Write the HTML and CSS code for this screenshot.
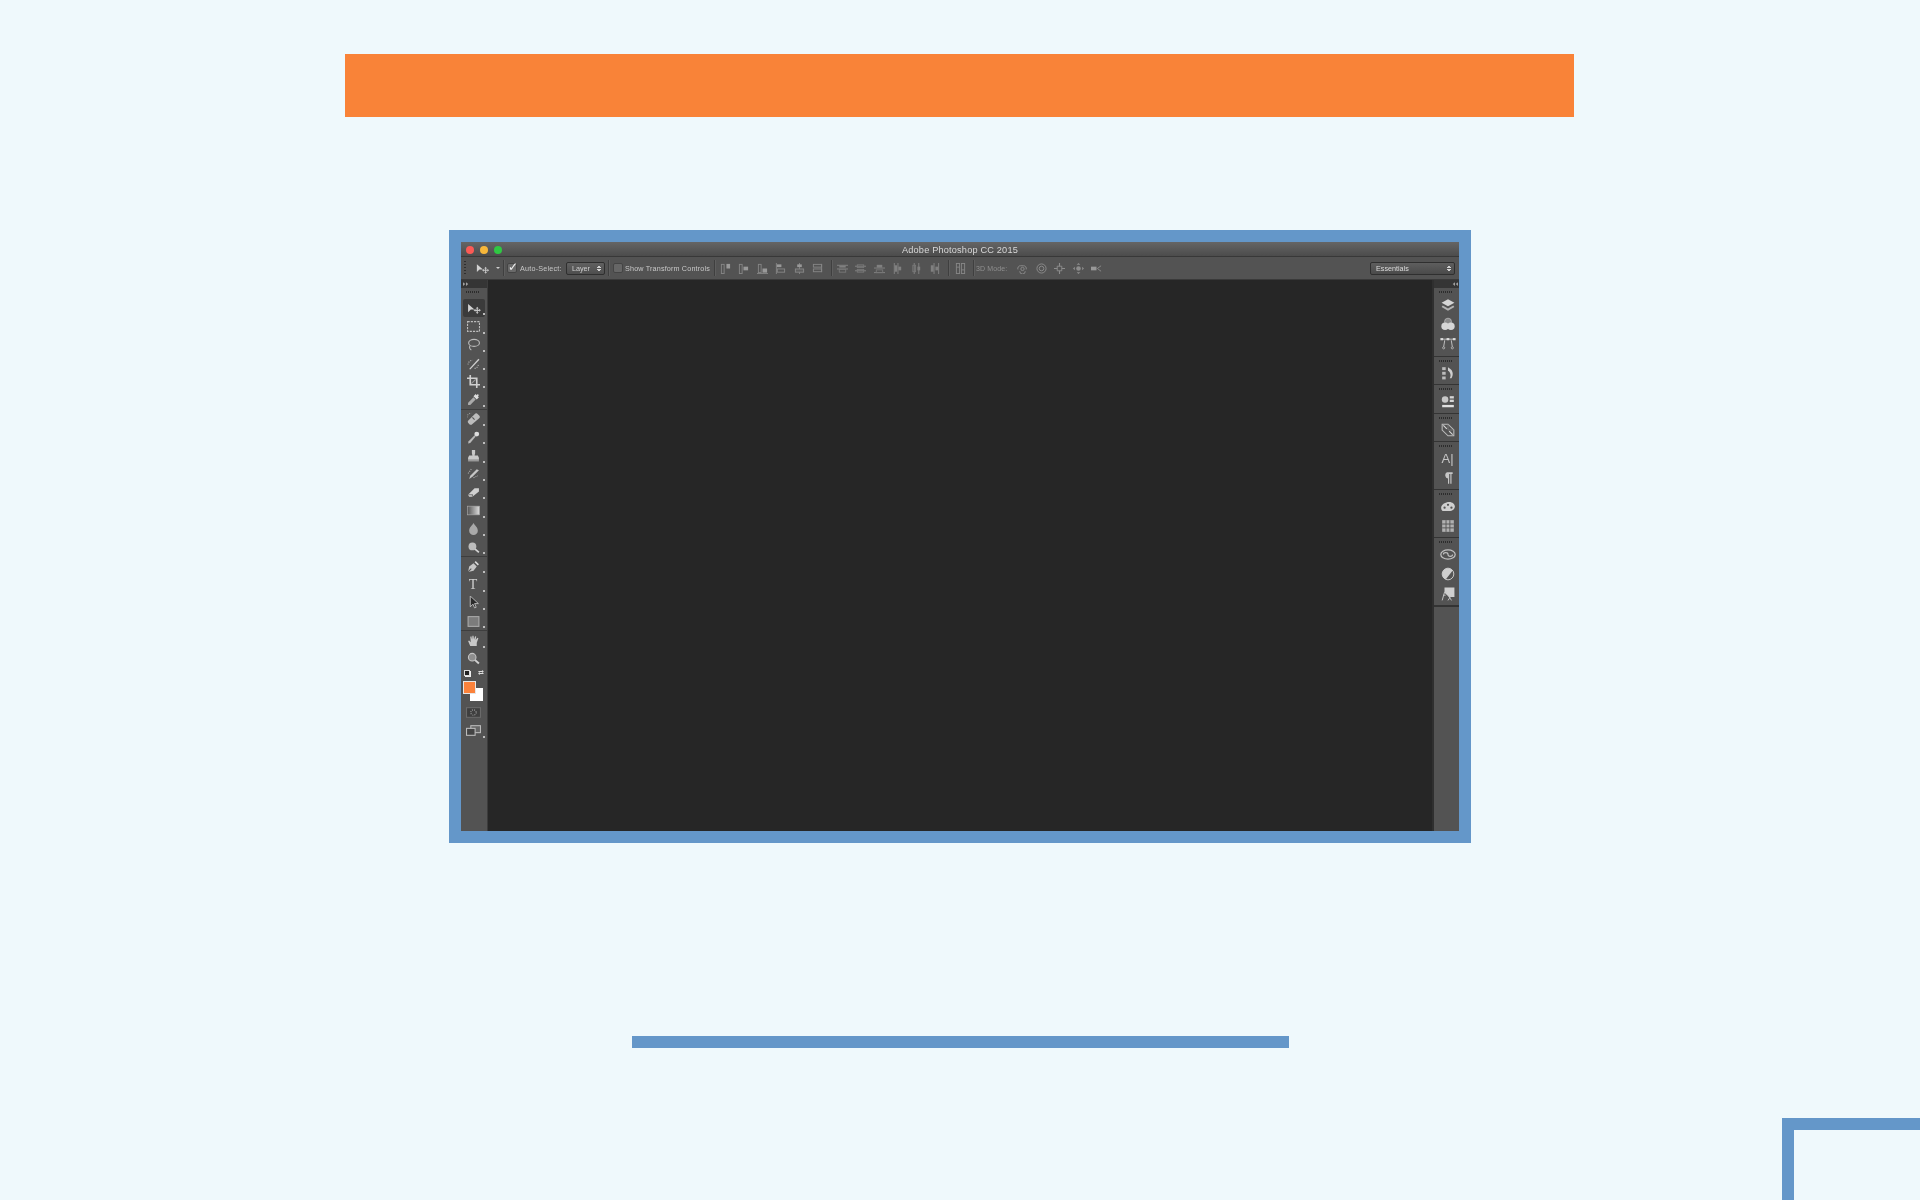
FILE: index.html
```html
<!DOCTYPE html>
<html lang="en">
<head>
<meta charset="utf-8">
<title>Adobe Photoshop CC 2015</title>
<link rel="stylesheet" href="styles.css">
</head>
<body>
<svg class="defs" width="0" height="0" aria-hidden="true">
  <symbol id="i-move" viewBox="0 0 16 12"><path d="M1 1v9l3-3h4z" fill="#d2d2d2"/><path d="M11 4l1.600 2h-1v1.400H13V6.400l2 1.600-2 1.600V8.600h-1.400V10h1L11 12 9.400 10h1V8.600H9v1L7 8l2-1.600v1h1.400V6h-1z" fill="#c4c4c4"/></symbol>
  <symbol id="i-marquee" viewBox="0 0 12 12"><rect x=".5" y="1.500" width="11" height="9" fill="none" stroke="#bdbdbd" stroke-dasharray="2 1"/></symbol>
  <symbol id="i-lasso" viewBox="0 0 12 12"><ellipse cx="6.500" cy="4.500" rx="5" ry="3.200" fill="none" stroke="#bcbcbc"/><path d="M3 7c-1 1-1 3 1 4" fill="none" stroke="#bcbcbc"/></symbol>
  <symbol id="i-wand" viewBox="0 0 12 12"><path d="M2 11l1 .5 8.500-9-1-1z" fill="#cfcfcf"/><path d="M1 7a4 4 0 0 1 4-4" fill="none" stroke="#b4b4b4" stroke-dasharray="1 1"/><path d="M7 10.500a4 4 0 0 0 3.500-3.500" fill="none" stroke="#b4b4b4" stroke-dasharray="1 1"/></symbol>
  <symbol id="i-crop" viewBox="0 0 12 12"><path d="M3 0v9h9M0 3h9v9" fill="none" stroke="#cfcfcf" stroke-width="1.500"/><path d="M4 8l4-4" stroke="#999"/></symbol>
  <symbol id="i-eyedrop" viewBox="0 0 12 12"><path d="M1 11v-2l5-5 2 2-5 5z" fill="#aaa"/><path d="M6 3l2-2 1 1 1-1 1 1-1 1 1 1-2 2z" fill="#ddd"/></symbol>
  <symbol id="i-heal" viewBox="0 0 12 12"><path d="M1 8l6-6a2 2 0 0 1 3 0l1 1a2 2 0 0 1 0 3l-6 5a2 2 0 0 1-3 0L1 10a2 2 0 0 1 0-2z" fill="#bcbcbc"/><path d="M5 5l2 2" stroke="#555"/><path d="M0 5a4 4 0 0 1 4-4" fill="none" stroke="#999" stroke-dasharray="1 1"/></symbol>
  <symbol id="i-brush" viewBox="0 0 12 12"><path d="M7 4l1 1-5 6-2 .5.500-2z" fill="#b8b8b8"/><ellipse cx="9" cy="2.800" rx="2.200" ry="2.200" fill="#ddd"/></symbol>
  <symbol id="i-stamp" viewBox="0 0 12 12"><path d="M4.500 1h3v3L7 6h3l1 2v2H1V8l1-2h3l-.5-2z" fill="#c8c8c8"/><rect x="1" y="10" width="10" height="1.500" fill="#9a9a9a"/></symbol>
  <symbol id="i-history" viewBox="0 0 12 12"><path d="M2 11l1-3 6-6 2 1-6 6z" fill="#c6c6c6"/><path d="M1 6l3-4M6 10l4-2" stroke="#aaa" stroke-dasharray="1 1"/></symbol>
  <symbol id="i-eraser" viewBox="0 0 12 12"><path d="M1 8l6-6h4v3L5 10H2z" fill="#d0d0d0"/><path d="M1 8h4v2" fill="none" stroke="#777"/></symbol>
  <symbol id="i-gradient" viewBox="0 0 12 12"><defs><linearGradient id="gr"><stop offset="0" stop-color="#555"/><stop offset="1" stop-color="#ddd"/></linearGradient></defs><rect x=".5" y="2" width="11" height="8" fill="url(#gr)" stroke="#aaa" stroke-width=".6"/></symbol>
  <symbol id="i-drop" viewBox="0 0 12 12"><path d="M6 1c1 2 4 4 4 7a4 4 0 0 1-8 0c0-3 3-5 4-7z" fill="#a9a9a9"/></symbol>
  <symbol id="i-dodge" viewBox="0 0 12 12"><circle cx="5" cy="5" r="3.600" fill="#bcbcbc"/><path d="M7.500 7.500l3.500 3" stroke="#d4d4d4" stroke-width="1.600"/></symbol>
  <symbol id="i-pen" viewBox="0 0 12 12"><path d="M1 11l1-5 4-3 3 3-3 4z" fill="#c6c6c6"/><path d="M7 2l1-1 3 3-1 1z" fill="#d8d8d8"/><path d="M1 11l3-3" stroke="#555"/></symbol>
  <symbol id="i-arrow" viewBox="0 0 12 12"><path d="M3 0v10l2.500-2.500 1.500 3.500 1.500-.6L7 7h3.500z" fill="#2a2a2a" stroke="#c4c4c4" stroke-width=".8"/></symbol>
  <symbol id="i-rect" viewBox="0 0 12 12"><rect x="1" y="1.500" width="10" height="9" fill="#7c7c7c" stroke="#aaa"/></symbol>
  <symbol id="i-hand" viewBox="0 0 12 12"><path d="M3 11L1 6.500l1-.5 1.500 1.500L3 2.500l1-.5.700 3L5 1.500h1L6.500 5 7.500 2l1 .3L8 5.500 9.500 3.500l1 .5L9 8v3z" fill="#c8c8c8"/></symbol>
  <symbol id="i-zoom" viewBox="0 0 12 12"><circle cx="4.800" cy="4.800" r="3.500" fill="#8e8e8e" stroke="#c4c4c4"/><path d="M7.500 7.500l3.500 3.200" stroke="#d0d0d0" stroke-width="1.800"/></symbol>
  <symbol id="i-mask" viewBox="0 0 14 10"><rect x=".5" y=".5" width="13" height="9" fill="#3f3f3f" stroke="#6a6a6a"/><circle cx="7" cy="5" r="2.500" fill="none" stroke="#999" stroke-dasharray="1 1"/></symbol>
  <symbol id="i-screen" viewBox="0 0 14 10"><rect x="4.500" y=".5" width="9" height="6.500" fill="#666" stroke="#bbb"/><rect x=".5" y="3" width="8" height="6.500" fill="#444" stroke="#bbb"/></symbol>
  <symbol id="i-layers" viewBox="0 0 12 12"><path d="M6 1l5.500 3L6 7 .5 4z" fill="#d6d6d6"/><path d="M1.500 6.500L6 9l4.500-2.500 1 1.200L6 11 .5 7.700z" fill="#b4b4b4"/></symbol>
  <symbol id="i-channels" viewBox="0 0 12 12"><circle cx="6" cy="4" r="3" fill="#888" stroke="#ccc" stroke-width=".5"/><circle cx="3.500" cy="8" r="3.200" fill="#d6d6d6"/><circle cx="8.500" cy="8" r="3.200" fill="#d6d6d6"/></symbol>
  <symbol id="i-paths" viewBox="0 0 14 12"><path d="M2 2h10M4 3l-1 6M10 3l1 6" fill="none" stroke="#c0c0c0" stroke-width=".9"/><rect x="0" y="1" width="2.500" height="2" fill="#ddd"/><rect x="5.700" y="1" width="2.500" height="2" fill="#ddd"/><rect x="11.500" y="1" width="2.500" height="2" fill="#ddd"/><circle cx="3" cy="10" r="1" fill="none" stroke="#c0c0c0" stroke-width=".7"/><circle cx="11" cy="10" r="1" fill="none" stroke="#c0c0c0" stroke-width=".7"/></symbol>
  <symbol id="i-actions" viewBox="0 0 12 12"><rect x="1" y="1" width="3" height="2.500" fill="#bbb"/><rect x="1" y="5" width="3" height="2.500" fill="#bbb"/><rect x="1" y="9" width="3" height="2.500" fill="#bbb"/><path d="M6 1l2 1.500C10 4 11 7 9 10.500H7.500C9 8 8 5 6 4z" fill="#cfcfcf"/></symbol>
  <symbol id="i-adjust" viewBox="0 0 12 12"><circle cx="3.500" cy="3.800" r="2.800" fill="#c8c8c8"/><rect x="7.500" y="1" width="3.500" height="2" fill="#d6d6d6"/><rect x="7.500" y="4" width="3.500" height="2" fill="#d6d6d6"/><rect x="1" y="8.500" width="10" height="2" fill="#e0e0e0"/></symbol>
  <symbol id="i-styles" viewBox="0 0 12 12"><path d="M1 1h5l5 5v5H6L1 6z" fill="none" stroke="#bcbcbc" stroke-width=".9"/><path d="M2 2l3 3M7 7l3 3" stroke="#d6d6d6"/><path d="M6 1v5M6 6h5" stroke="#888" stroke-width=".6"/></symbol>
  <symbol id="i-para" viewBox="0 0 12 12"><path d="M5 1h5v1.500H9V11H8V2.500H7V11H6V6.500a3 3 0 0 1-1-5.500z" fill="#c6c6c6"/></symbol>
  <symbol id="i-palette" viewBox="0 0 14 10"><path d="M1 6c0-3 4-5 7-5 3 0 5 2 5 4s-2 4-5 4H3C2 9 1 8 1 6z" fill="#d0d0d0"/><circle cx="4" cy="6" r="1" fill="#555"/><circle cx="7" cy="3.500" r="1" fill="#555"/><circle cx="10" cy="6" r="1" fill="#555"/></symbol>
  <symbol id="i-grid" viewBox="0 0 12 12"><rect x="1" y="1" width="10" height="10" fill="#b0b0b0"/><path d="M1 4.300h10M1 7.600h10M4.300 1v10M7.600 1v10" stroke="#555" stroke-width=".8"/></symbol>
  <symbol id="i-cc" viewBox="0 0 14 10"><ellipse cx="7" cy="5" rx="6.300" ry="4" fill="none" stroke="#c0c0c0" stroke-width="1.100"/><path d="M3 5a2 1.600 0 0 1 4 0 2 1.600 0 0 0 4 0" fill="none" stroke="#c0c0c0"/></symbol>
  <symbol id="i-halfc" viewBox="0 0 12 12"><circle cx="6" cy="6" r="5" fill="#d0d0d0"/><path d="M10 3a5 5 0 0 1-6 7.700z" fill="#555"/><circle cx="6" cy="6" r="5" fill="none" stroke="#d0d0d0" stroke-width=".8"/></symbol>
  <symbol id="i-fx" viewBox="0 0 12 12"><path d="M3 .5h8.500v8H7L3 5z" fill="#cfcfcf"/><path d="M1 11.500l2-7h2M2 7h2M6 7l3 4.500M9 7l-3 4.500" fill="none" stroke="#c8c8c8" stroke-width=".8"/></symbol>
  <symbol id="a-top" viewBox="0 0 12 12"><rect x="1.500" y="1.500" width="3" height="10" fill="none" stroke="#868686"/><rect x="7" y="1" width="4" height="5" fill="#999"/></symbol>
  <symbol id="a-mid" viewBox="0 0 12 12"><rect x="1.500" y="1.500" width="3" height="10" fill="none" stroke="#868686"/><rect x="6" y="4" width="5" height="4" fill="#999"/></symbol>
  <symbol id="a-bot" viewBox="0 0 12 12"><rect x="1.500" y="1.500" width="3" height="9" fill="none" stroke="#868686"/><rect x="6" y="6" width="5" height="4.500" fill="#999"/><path d="M0 11.500h12" stroke="#868686"/></symbol>
  <symbol id="a-left" viewBox="0 0 12 12"><path d="M1.500 0v12" stroke="#868686"/><rect x="2" y="1.500" width="5" height="3" fill="#999"/><rect x="2.500" y="6.500" width="8" height="3.500" fill="none" stroke="#868686"/></symbol>
  <symbol id="a-cen" viewBox="0 0 12 12"><path d="M6 0v12" stroke="#868686"/><rect x="3.500" y="1.500" width="5" height="3" fill="#999"/><rect x="1.500" y="6.500" width="9" height="3.500" fill="#5e5e5e" stroke="#868686"/></symbol>
  <symbol id="a-right" viewBox="0 0 12 12"><path d="M10.500 1v9" stroke="#868686"/><rect x="1.500" y="1.500" width="9" height="3" fill="none" stroke="#868686"/><rect x="1.500" y="6.500" width="9" height="3" fill="none" stroke="#868686"/></symbol>
  <symbol id="d-h1" viewBox="0 0 12 12"><path d="M0 2.500h12M0 6.500h12" stroke="#868686"/><rect x="2.500" y="3" width="7" height="2" fill="#808080"/><rect x="2.500" y="7" width="7" height="3" fill="none" stroke="#777"/></symbol>
  <symbol id="d-h2" viewBox="0 0 12 12"><path d="M0 3.500h12M0 8.500h12" stroke="#868686"/><rect x="2.500" y="2" width="7" height="3" fill="none" stroke="#777"/><rect x="2.500" y="7" width="7" height="3" fill="none" stroke="#777"/></symbol>
  <symbol id="d-h3" viewBox="0 0 12 12"><path d="M0 5.500h12M0 10.500h12" stroke="#868686"/><rect x="3" y="2" width="6" height="3" fill="#808080"/><rect x="2.500" y="7.500" width="7" height="3" fill="none" stroke="#777"/></symbol>
  <symbol id="d-v1" viewBox="0 0 12 12"><path d="M2.500 0v12M6.500 0v12" stroke="#868686"/><rect x="3" y="2.500" width="2.500" height="7" fill="#808080"/><rect x="7" y="4" width="3" height="4" fill="#808080"/></symbol>
  <symbol id="d-v2" viewBox="0 0 12 12"><path d="M3.500 0v12M8.500 0v12" stroke="#868686"/><rect x="2" y="2.500" width="3" height="7" fill="none" stroke="#777"/><rect x="7" y="4" width="3" height="4" fill="#808080"/></symbol>
  <symbol id="d-v3" viewBox="0 0 12 12"><path d="M5.500 0v12M10.500 0v12" stroke="#868686"/><rect x="2" y="2.500" width="3" height="7" fill="#808080"/><rect x="7" y="4" width="3" height="4" fill="#808080"/></symbol>
  <symbol id="d-auto" viewBox="0 0 12 12"><rect x="1.500" y=".5" width="3.500" height="11" fill="none" stroke="#868686"/><rect x="7" y=".5" width="3.500" height="11" fill="none" stroke="#868686"/><path d="M1.500 4.500h3.500M7 7.500h3.500" stroke="#868686"/></symbol>
  <symbol id="t-orbit" viewBox="0 0 12 12"><path d="M1 7a3 3 0 0 1 3-4h3a3 3 0 0 1 3 4M3 9a3 3 0 0 0 6 0" fill="none" stroke="#8d8d8d"/><circle cx="6" cy="6.500" r="1.800" fill="none" stroke="#8d8d8d"/></symbol>
  <symbol id="t-roll" viewBox="0 0 12 12"><circle cx="6" cy="6" r="5" fill="none" stroke="#8d8d8d"/><circle cx="6" cy="6" r="2.500" fill="none" stroke="#8d8d8d"/></symbol>
  <symbol id="t-pan" viewBox="0 0 12 12"><path d="M6 0v12M0 6h12" stroke="#8d8d8d" stroke-width="1.200"/><path d="M3.500 3.500h5v5h-5z" fill="#535353" stroke="#8d8d8d"/></symbol>
  <symbol id="t-slide" viewBox="0 0 12 12"><path d="M6 0l2 2H4zM6 12l2-2H4zM0 6l2-2v4zM12 6l-2-2v4z" fill="#8d8d8d"/><circle cx="6" cy="6" r="2.500" fill="#8d8d8d"/></symbol>
  <symbol id="t-cam" viewBox="0 0 12 12"><rect x="0" y="4" width="6" height="4" fill="#999"/><path d="M11 3L7 6l4 3" fill="none" stroke="#8d8d8d"/></symbol>
  <symbol id="i-right" viewBox="0 0 8 5"><path d="M0 0l3 2.500L0 5zM4 0l3 2.500L4 5z" fill="#a0a0a0"/></symbol>
  <symbol id="i-left" viewBox="0 0 8 5"><path d="M4 0L1 2.500 4 5zM8 0L5 2.500 8 5z" fill="#a0a0a0"/></symbol>
</svg>

<header class="banner"></header>

<section class="frame">
  <div class="window">
    <div class="titlebar">
      <div class="lights">
        <span class="light red"></span>
        <span class="light yellow"></span>
        <span class="light green"></span>
      </div>
      <span class="title">Adobe Photoshop CC 2015</span>
    </div>

    <div class="options">
      <span class="grip-v"></span>
      <svg class="opt-tool"><use href="#i-move"/></svg>
      <span class="caret"></span>
      <span class="sep s-tool"></span>
      <span class="check on">✓</span>
      <span class="opt-label auto">Auto-Select:</span>
      <span class="select layer"><span>Layer</span><span class="updown"></span></span>
      <span class="sep s-layer"></span>
      <span class="check"></span>
      <span class="opt-label show">Show Transform Controls</span>
      <span class="sep s-show"></span>
      <div class="align">
        <svg><use href="#a-top"/></svg><svg><use href="#a-mid"/></svg><svg><use href="#a-bot"/></svg>
        <svg><use href="#a-left"/></svg><svg><use href="#a-cen"/></svg><svg><use href="#a-right"/></svg>
      </div>
      <span class="sep s-align"></span>
      <div class="align">
        <svg><use href="#d-h1"/></svg><svg><use href="#d-h2"/></svg><svg><use href="#d-h3"/></svg>
        <svg><use href="#d-v1"/></svg><svg><use href="#d-v2"/></svg><svg><use href="#d-v3"/></svg>
      </div>
      <span class="sep s-dist"></span>
      <div class="align"><svg><use href="#d-auto"/></svg></div>
      <span class="sep s-auto"></span>
      <span class="opt-label mode">3D Mode:</span>
      <div class="align three-d">
        <svg><use href="#t-orbit"/></svg><svg><use href="#t-roll"/></svg><svg><use href="#t-pan"/></svg><svg><use href="#t-slide"/></svg><svg><use href="#t-cam"/></svg>
      </div>
      <span class="select essentials"><span>Essentials</span><span class="updown"></span></span>
    </div>

    <div class="workspace">
      <aside class="tools">
        <div class="strip"><svg class="arrows"><use href="#i-right"/></svg></div>
        <span class="grip"></span>
        <div class="tool-group">
          <div class="tool active"><svg class="wide"><use href="#i-move"/></svg></div>
          <div class="tool"><svg><use href="#i-marquee"/></svg></div>
          <div class="tool"><svg><use href="#i-lasso"/></svg></div>
          <div class="tool"><svg><use href="#i-wand"/></svg></div>
          <div class="tool"><svg><use href="#i-crop"/></svg></div>
          <div class="tool"><svg><use href="#i-eyedrop"/></svg></div>
        </div>
        <div class="tool-group">
          <div class="tool"><svg><use href="#i-heal"/></svg></div>
          <div class="tool"><svg><use href="#i-brush"/></svg></div>
          <div class="tool"><svg><use href="#i-stamp"/></svg></div>
          <div class="tool"><svg><use href="#i-history"/></svg></div>
          <div class="tool"><svg><use href="#i-eraser"/></svg></div>
          <div class="tool"><svg><use href="#i-gradient"/></svg></div>
          <div class="tool"><svg><use href="#i-drop"/></svg></div>
          <div class="tool"><svg><use href="#i-dodge"/></svg></div>
        </div>
        <div class="tool-group">
          <div class="tool"><svg><use href="#i-pen"/></svg></div>
          <div class="tool"><span class="type-t">T</span></div>
          <div class="tool"><svg><use href="#i-arrow"/></svg></div>
          <div class="tool"><svg><use href="#i-rect"/></svg></div>
        </div>
        <div class="tool-group">
          <div class="tool"><svg><use href="#i-hand"/></svg></div>
          <div class="tool plain"><svg><use href="#i-zoom"/></svg></div>
        </div>
        <div class="mini-row">
          <span class="mini-swatch"></span>
          <span class="mini-swap">⇄</span>
        </div>
        <div class="swatches">
          <span class="swatch bg"></span>
          <span class="swatch fg"></span>
        </div>
        <div class="tool plain low"><svg class="wide"><use href="#i-mask"/></svg></div>
        <div class="tool"><svg class="wide"><use href="#i-screen"/></svg></div>
      </aside>

      <main class="canvas"></main>

      <aside class="dock">
        <div class="strip"><svg class="arrows right"><use href="#i-left"/></svg></div>
        <div class="dock-group first">
          <div class="dock-icon"><svg><use href="#i-layers"/></svg></div>
          <div class="dock-icon"><svg><use href="#i-channels"/></svg></div>
          <div class="dock-icon"><svg class="wide"><use href="#i-paths"/></svg></div>
        </div>
        <div class="dock-group">
          <div class="dock-icon"><svg><use href="#i-actions"/></svg></div>
        </div>
        <div class="dock-group">
          <div class="dock-icon"><svg><use href="#i-adjust"/></svg></div>
        </div>
        <div class="dock-group">
          <div class="dock-icon"><svg><use href="#i-styles"/></svg></div>
        </div>
        <div class="dock-group">
          <div class="dock-icon"><span class="char-a">A|</span></div>
          <div class="dock-icon"><svg><use href="#i-para"/></svg></div>
        </div>
        <div class="dock-group">
          <div class="dock-icon"><svg class="wide"><use href="#i-palette"/></svg></div>
          <div class="dock-icon"><svg><use href="#i-grid"/></svg></div>
        </div>
        <div class="dock-group last">
          <div class="dock-icon"><svg class="wide"><use href="#i-cc"/></svg></div>
          <div class="dock-icon"><svg><use href="#i-halfc"/></svg></div>
          <div class="dock-icon"><svg><use href="#i-fx"/></svg></div>
        </div>
      </aside>
    </div>
  </div>
</section>

<div class="rule"></div>
<div class="corner"></div>
</body>
</html>
```

FILE: styles.css
```css
* { box-sizing: border-box; }

html, body { height: 100%; }

body {
  margin: 0;
  overflow: hidden;
  position: relative;
  background: #eff9fc;
  font-family: "Liberation Sans", Arial, sans-serif;
  padding-top: 54px;
}

.defs { position: absolute; }

.banner {
  width: 1229px;
  height: 63px;
  margin-left: 345px;
  background: #f98338;
}

.frame {
  width: 1022px;
  height: 613px;
  margin: 113px 0 0 449px;
  padding: 12px;
  background: #6497c9;
}

.window {
  width: 100%;
  height: 100%;
  display: flex;
  flex-direction: column;
  background: #535353;
  filter: blur(0.45px);
}

.titlebar {
  height: 15px;
  flex: none;
  display: flex;
  align-items: center;
  justify-content: center;
  position: relative;
  padding-top: 1px;
  background: linear-gradient(#656565, #4c4c4c);
  border-bottom: 1px solid #383838;
}

.lights {
  position: absolute;
  left: 5px;
  top: 4px;
  display: flex;
  gap: 6px;
}

.light { width: 8px; height: 8px; border-radius: 50%; }
.red { background: #fb5a55; }
.yellow { background: #f7b73a; }
.green { background: #2fc843; }

.title {
  font-size: 9.200px;
  letter-spacing: 0.180px;
  color: #d8d8d8;
}

.options {
  height: 23px;
  flex: none;
  display: flex;
  align-items: center;
  background: #535353;
  border-bottom: 1px solid #3a3a3a;
  color: #c8c8c8;
  font-size: 7.200px;
}

.grip-v {
  width: 2px;
  height: 15px;
  margin-left: 3px;
  flex: none;
  background: repeating-linear-gradient(#2f2f2f 0 1px, transparent 1px 3px);
}

.opt-tool { width: 14px; height: 11px; margin-left: 10px; flex: none; }

.caret {
  width: 0;
  height: 0;
  margin-left: 6px;
  flex: none;
  border: 2px solid transparent;
  border-top-color: #cfcfcf;
  border-bottom: 0;
}

.sep {
  width: 1px;
  height: 16px;
  flex: none;
  background: #3f3f3f;
  box-shadow: 1px 0 0 #5e5e5e;
}

.s-tool { margin: 0 3px; }
.s-layer { margin: 0 4px 0 3px; }
.s-show { margin: 0 5px 0 4px; }
.s-align { margin: 0 5px 0 8px; }
.s-dist { margin: 0 6px 0 8px; }
.s-auto { margin: 0 2px 0 7px; }

.check {
  width: 10px;
  height: 10px;
  flex: none;
  border-radius: 2px;
  background: #666;
  border: 1px solid #444;
  color: #eee;
  font-size: 12px;
  line-height: 7px;
  text-align: center;
}

.check.on { background: #6a6a6a; }

.opt-label { white-space: nowrap; flex: none; }
.auto { margin-left: 3px; width: 42px; letter-spacing: 0.220px; }
.show { margin-left: 2px; width: 85px; letter-spacing: 0.170px; }
.mode { width: 34px; color: #8f8f8f; font-size: 7px; letter-spacing: 0.150px; }

.select {
  display: flex;
  align-items: center;
  justify-content: space-between;
  height: 13px;
  flex: none;
  padding: 0 3px 0 5px;
  border-radius: 2px;
  background: linear-gradient(#606060, #4e4e4e);
  border: 1px solid #2f2f2f;
  color: #cfcfcf;
}

.layer { width: 39px; margin-left: 4px; }

.essentials {
  width: 85px;
  margin-left: auto;
  margin-right: 4px;
  color: #ddd;
  background: linear-gradient(#5e5e5e, #4a4a4a);
}

.updown {
  width: 4px;
  height: 7px;
  background:
    linear-gradient(135deg, transparent 50%, #d0d0d0 50%) 0 0 / 2px 3px no-repeat,
    linear-gradient(225deg, transparent 50%, #d0d0d0 50%) 2px 0 / 2px 3px no-repeat,
    linear-gradient(45deg, transparent 50%, #d0d0d0 50%) 0 4px / 2px 3px no-repeat,
    linear-gradient(315deg, transparent 50%, #d0d0d0 50%) 2px 4px / 2px 3px no-repeat;
}

.align { display: flex; gap: 7.400px; flex: none; }
.align svg { width: 11px; height: 11px; flex: none; }
.three-d { margin-left: 7.500px; }

.workspace { flex: 1; min-height: 0; display: flex; }

.tools {
  width: 27px;
  flex: none;
  display: flex;
  flex-direction: column;
  padding-right: 2px;
  background: #535353;
  border-right: 1px solid #3c3c3c;
}

.strip {
  height: 8px;
  flex: none;
  background: #353535;
  display: flex;
  align-items: center;
  margin-right: -2px;
}

.dock .strip { margin-right: 0; }

.arrows { width: 6px; height: 4px; margin-left: 2px; flex: none; }
.arrows.right { margin-left: auto; margin-right: 1px; }

.grip {
  height: 2px;
  width: 14px;
  margin: 3px 0 6px 5px;
  flex: none;
  background: repeating-linear-gradient(90deg, #2c2c2c 0 1px, transparent 1px 2px);
}

.tool-group { flex: none; }
.tool-group + .tool-group { border-top: 1px solid #3e3e3e; margin-right: -2px; padding-right: 2px; }

.tool {
  height: 18.300px;
  flex: none;
  position: relative;
  display: flex;
  align-items: center;
  justify-content: center;
}

.tool svg { width: 13px; height: 13px; }
.tool svg.wide { width: 15px; height: 11px; }

.tool::after {
  content: "";
  position: absolute;
  right: 0;
  bottom: 2px;
  width: 2px;
  height: 2px;
  background: #bdbdbd;
}

.tool.plain::after { display: none; }

.tool.active {
  margin: 0 0 0 2px;
  background: #3b3b3b;
  border-radius: 2px;
}

.type-t {
  font-family: "Liberation Serif", serif;
  font-size: 14px;
  line-height: 14px;
  color: #cfcfcf;
}

.mini-row {
  height: 11px;
  flex: none;
  display: flex;
  align-items: center;
  justify-content: space-between;
  padding: 0 1px 0 3px;
}

.mini-swatch {
  width: 6px;
  height: 6px;
  background: #222;
  border: 1px solid #ddd;
  box-shadow: 1px 1px 0 #eee;
}

.mini-swap { font-size: 7px; line-height: 8px; color: #ddd; }

.swatches {
  height: 20px;
  flex: none;
  position: relative;
  margin: 2px 0 0 2px;
}

.swatch { position: absolute; width: 13px; height: 13px; }
.fg { left: 0; top: 0; background: #fb823b; border: 1px solid #e6e6e6; }
.bg { left: 7px; top: 7px; background: #fff; }

.low { margin-top: 2px; }

.canvas {
  flex: 1;
  background: #262626;
}

.dock {
  width: 27px;
  flex: none;
  display: flex;
  flex-direction: column;
  background: #535353;
  border-left: 2px solid #2f2f2f;
}

.dock-group {
  flex: none;
  padding: 7px 0 1px 2px;
  position: relative;
  border-bottom: 1px solid #343434;
}

.dock-group.first { padding-bottom: 2px; }

.dock-group::before {
  content: "";
  position: absolute;
  left: 5px;
  top: 3px;
  width: 14px;
  height: 2px;
  background: repeating-linear-gradient(90deg, #2c2c2c 0 1px, transparent 1px 2px);
}

.dock-group.last { border-bottom: 2px solid #333; }

.dock-icon {
  height: 19.500px;
  display: flex;
  align-items: center;
  justify-content: center;
}

.dock-icon svg { width: 14px; height: 14px; }
.dock-icon svg.wide { width: 16px; height: 13px; }

.char-a { font-size: 13px; line-height: 14px; color: #c4c4c4; }

.rule {
  width: 657px;
  height: 12px;
  margin: 193px 0 0 632px;
  background: #6497c9;
}

.corner {
  position: absolute;
  right: 0;
  bottom: 0;
  width: 138px;
  height: 82px;
  border-left: 12px solid #6497c9;
  border-top: 12px solid #6497c9;
}
```
